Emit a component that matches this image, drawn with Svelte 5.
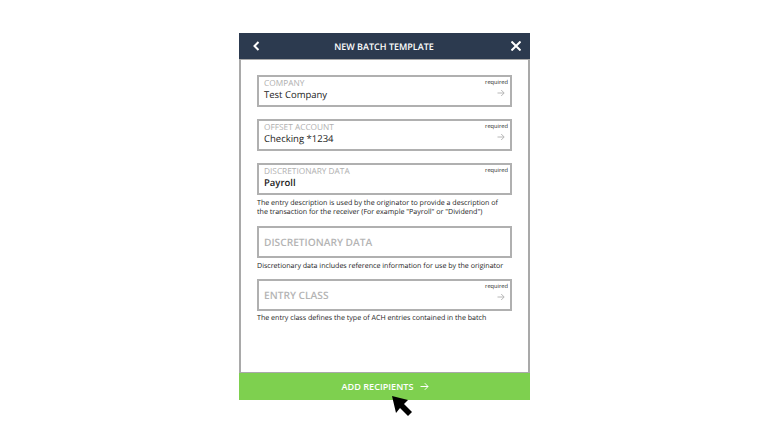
<script>
  const back = "M5.5 1 L1.5 5 L5.5 9";
</script>

<div class="page">
  <div class="panel">
    <header class="bar">
      <svg class="back" width="7" height="10" viewBox="0 0 7 10"><path d={back} /></svg>
      <h1>NEW BATCH TEMPLATE</h1>
      <svg class="close" width="10" height="10" viewBox="0 0 10 10"><path d="M0.5 0.5 L9.5 9.5 M9.5 0.5 L0.5 9.5" /></svg>
    </header>

    <div class="body">
      <div class="field stacked gap">
        <span class="req">required</span>
        <span class="label">COMPANY</span>
        <span class="value">Test Company</span>
        <svg class="arrow" width="8" height="8" viewBox="0 0 8 8"><path d="M0.5 4 H7 M4.2 1 L7.2 4 L4.2 7" /></svg>
      </div>

      <div class="field stacked gap">
        <span class="req">required</span>
        <span class="label">OFFSET ACCOUNT</span>
        <span class="value">Checking *1234</span>
        <svg class="arrow" width="8" height="8" viewBox="0 0 8 8"><path d="M0.5 4 H7 M4.2 1 L7.2 4 L4.2 7" /></svg>
      </div>

      <div class="field stacked">
        <span class="req">required</span>
        <span class="label">DISCRETIONARY DATA</span>
        <span class="value strong">Payroll</span>
      </div>
      <p class="help first">The entry description is used by the originator to provide a description of the transaction for the receiver (For example "Payroll" or "Dividend")</p>

      <div class="field empty">
        <span class="placeholder">DISCRETIONARY DATA</span>
      </div>
      <p class="help second">Discretionary data includes reference information for use by the originator</p>

      <div class="field empty">
        <span class="req">required</span>
        <span class="placeholder">ENTRY CLASS</span>
        <svg class="arrow" width="8" height="8" viewBox="0 0 8 8"><path d="M0.5 4 H7 M4.2 1 L7.2 4 L4.2 7" /></svg>
      </div>
      <p class="help third">The entry class defines the type of ACH entries contained in the batch</p>
    </div>

    <button class="add">
      ADD RECIPIENTS
      <svg width="9" height="9" viewBox="0 0 9 9"><path d="M0.5 4.5 H8 M4.8 1.2 L8 4.5 L4.8 7.8" /></svg>
    </button>

    <svg class="cursor" width="24" height="24" viewBox="0 0 24 24">
      <path d="M1 1 L17 5 L13 9 L21 17 L17 21 L9 13 L5 18 Z" />
    </svg>
  </div>
</div>

<style>
  :global(body) {
    background: #fff;
    font-family: "Open Sans", "Liberation Sans", sans-serif;
    text-rendering: geometricPrecision;
  }

  .page {
    width: 768px;
    height: 432px;
    padding: 33px 0 0 239px;
    box-sizing: border-box;
  }

  .panel {
    position: relative;
    width: 291px;
    height: 367px;
    display: flex;
    flex-direction: column;
  }

  .bar {
    height: 26px;
    flex: none;
    background: #2c3a4f;
    display: flex;
    align-items: center;
    justify-content: space-between;
    padding: 0 9px 0 14px;
  }

  .bar h1 {
    margin: 0 3px 0 0;
    font-size: 9px;
    font-weight: 600;
    color: #fff;
  }

  .bar svg path {
    fill: none;
    stroke: #fff;
    stroke-width: 2;
  }

  .body {
    flex: 1;
    border: 2px solid #a9a9a9;
    border-width: 1px 2px 1px;
    padding: 15px 16px 0;
  }

  .field {
    position: relative;
    box-sizing: border-box;
    width: 255px;
    height: 32px;
    border: 2px solid #b0b0b0;
    padding: 0 5px;
    display: flex;
    flex-direction: column;
    justify-content: center;
  }

  .stacked {
    padding-bottom: 2px;
  }

  .gap {
    margin-bottom: 12px;
  }

  .label {
    font-size: 8.3px;
    line-height: 10px;
    color: #b0b0b0;
  }

  .value {
    font-size: 9.5px;
    line-height: 12px;
    color: #222;
  }

  .strong {
    font-weight: 600;
  }

  .placeholder {
    font-size: 10.2px;
    font-weight: 600;
    color: #b4b4b4;
  }

  .req {
    position: absolute;
    top: 1px;
    right: 2px;
    font-size: 5.7px;
    font-weight: 500;
    line-height: 9px;
    color: #222;
  }

  .arrow {
    position: absolute;
    top: 11.5px;
    right: 5px;
  }

  .arrow path {
    fill: none;
    stroke: #b0b0b0;
    stroke-width: 0.9;
  }

  .help {
    margin: 0;
    font-size: 7.1px;
    line-height: 9px;
    color: #222;
  }

  .help.first {
    padding: 4px 10px 9px 0;
  }

  .help.second {
    padding: 4px 0 8px;
  }

  .help.third {
    padding: 3px 0 0;
  }

  .add {
    flex: none;
    height: 27px;
    border: none;
    padding: 0 0 0 2px;
    background: #7ed04f;
    color: #fff;
    font: 600 9.1px "Open Sans", sans-serif;
    display: flex;
    align-items: center;
    justify-content: center;
    gap: 7px;
  }

  .add path {
    fill: none;
    stroke: #fff;
    stroke-width: 1;
  }

  .cursor {
    position: absolute;
    left: 152px;
    top: 362px;
  }

  .cursor path {
    fill: #000;
  }
</style>
